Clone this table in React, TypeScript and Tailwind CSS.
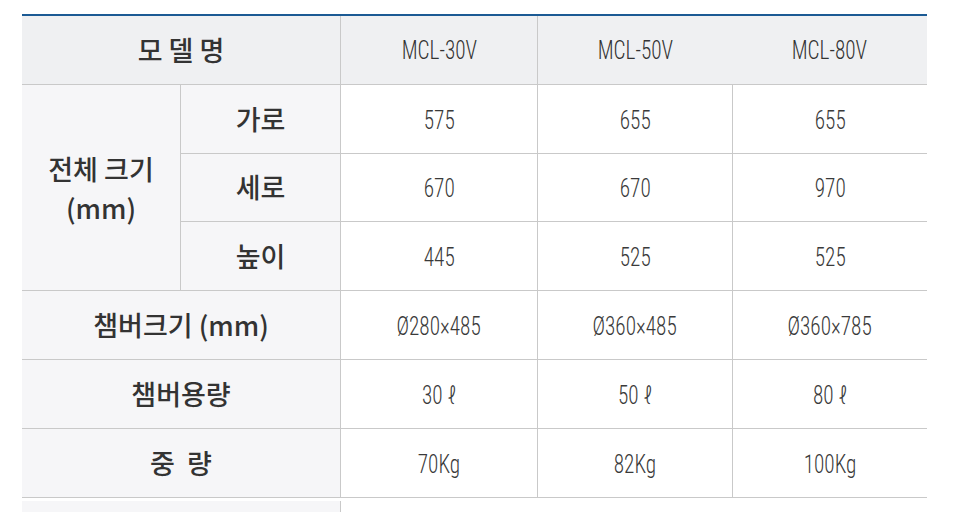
import React from "react";

const ko = { fontFamily: '"Noto Sans CJK KR", "Noto Sans", sans-serif' };
const num = { fontFamily: '"Roboto Condensed", "Liberation Sans Narrow", "Roboto", sans-serif' };

function HeadCell({ children, className = "" }: { children: React.ReactNode; className?: string }) {
  return (
    <div
      className={`flex items-center justify-center border-b border-[#c9c9c9] bg-[#f6f6f8] text-[27px] font-medium text-[#333] ${className}`}
      style={ko}
    >
      {children}
    </div>
  );
}

function Num({ children }: { children: React.ReactNode }) {
  return <span className="inline-block origin-center scale-x-[0.85] whitespace-pre">{children}</span>;
}

function Val({ children, className = "", noLeft = false }: { children: React.ReactNode; className?: string; noLeft?: boolean }) {
  return (
    <div
      className={`flex items-center justify-center border-b border-[#c9c9c9] ${noLeft ? "" : "border-l"} bg-white pt-[3px] text-[25px] font-light text-[#3a3a3a] ${className}`}
      style={num}
    >
      <Num>{children}</Num>
    </div>
  );
}

export default function App() {
  const rows: { label: string; v: string[]; cls?: string }[] = [
    { label: "챔버크기 (mm)", v: ["Ø280×485", "Ø360×485", "Ø360×785"] },
    { label: "챔버용량", v: ["30 ℓ", "50 ℓ", "80 ℓ"] },
    { label: "중 량", v: ["70Kg", "82Kg", "100Kg"], cls: "[word-spacing:6px]" },
  ];
  const dims: { label: string; v: string[] }[] = [
    { label: "가로", v: ["575", "655", "655"] },
    { label: "세로", v: ["670", "670", "970"] },
    { label: "높이", v: ["445", "525", "525"] },
  ];
  return (
    <div className="min-h-[512px] w-[964px] bg-white">
      <div className="ml-[22px] w-[905px] pt-[14px]">
        <div className="grid grid-cols-[158px_160px_197px_195px_195px] grid-rows-[69px_69px_68px_69px_69px_69px_69px] border-t-2 border-[#1b5a94]">
          {/* header */}
          <div
            className="col-span-2 flex items-center justify-center border-b border-[#c9c9c9] bg-[#eff0f2] text-[27px] font-medium text-[#333] whitespace-pre"
            style={ko}
          >
            모 델 명
          </div>
          {["MCL-30V", "MCL-50V", "MCL-80V"].map((m, i) => (
            <div
              key={m}
              className={`flex items-center justify-center border-b border-[#c9c9c9] bg-[#eff0f2] pt-[1px] text-[25px] font-light text-[#333] ${i < 2 ? "border-l" : ""}`}
              style={num}
            >
              <Num>{m}</Num>
            </div>
          ))}

          {/* dims */}
          <div
            className="row-span-3 flex flex-col items-center justify-center border-b border-[#c9c9c9] bg-[#f6f6f8] text-[27px] font-medium leading-[39px] text-[#333]"
            style={ko}
          >
            <span>전체 크기</span>
            <span>(mm)</span>
          </div>
          {dims.map((d) => (
            <React.Fragment key={d.label}>
              <HeadCell className="border-l">{d.label}</HeadCell>
              {d.v.map((x, i) => (
                <Val key={i}>{x}</Val>
              ))}
            </React.Fragment>
          ))}

          {rows.map((r) => (
            <React.Fragment key={r.label}>
              <HeadCell className={`col-span-2 whitespace-pre ${r.cls ?? ""}`}>{r.label}</HeadCell>
              {r.v.map((x, i) => (
                <Val key={i}>{x}</Val>
              ))}
            </React.Fragment>
          ))}
        </div>
        <div className="mt-[3px] grid h-[20px] grid-cols-[318px_587px]">
          <div className="bg-[#f6f6f8]" />
          <div className="border-l border-[#c9c9c9] bg-white" />
        </div>
      </div>
    </div>
  );
}
